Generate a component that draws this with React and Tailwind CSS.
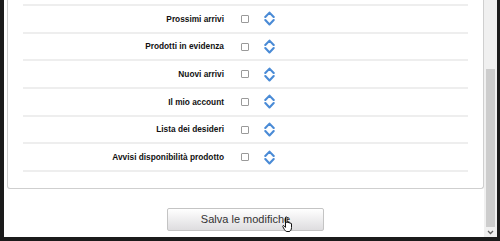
import React from "react"

const rows = [
  "Prossimi arrivi",
  "Prodotti in evidenza",
  "Nuovi arrivi",
  "Il mio account",
  "Lista dei desideri",
  "Avvisi disponibilità prodotto",
]

function SortIcon() {
  return (
    <svg width="11" height="15" viewBox="0 0 11 15" fill="none">
      <path d="M1.3 6 L5.5 1.6 L9.7 6" stroke="#4a8bd6" strokeWidth="2.1" strokeLinecap="round" strokeLinejoin="round" />
      <path d="M1.3 9 L5.5 13.4 L9.7 9" stroke="#4a8bd6" strokeWidth="2.1" strokeLinecap="round" strokeLinejoin="round" />
    </svg>
  )
}

function HandCursor() {
  return (
    <svg width="13" height="17" viewBox="0 0 13 17" className="absolute left-[114px] top-[7px]">
      <path
        d="M3.5 1.5 C3.5 0.6 5 0.6 5 1.5 L5 7 L5 6 C5 5.2 6.5 5.2 6.5 6 L6.5 7 C6.5 6.3 8 6.3 8 7 L8 7.6 C8 7 9.5 7 9.5 7.8 L9.5 11.5 C9.5 13.5 8.5 15.5 7 15.5 L5 15.5 C3.8 15.5 3 14.5 2.3 13.4 L0.8 10.6 C0.4 9.8 1.4 9.1 2 9.8 L3.5 11.4 Z"
        fill="#fff"
        stroke="#111"
        strokeWidth="1"
        strokeLinejoin="round"
      />
    </svg>
  )
}

export default function App() {
  return (
    <div className="w-[500px] h-[241px] bg-[#1b1b1b] pl-[4px] pr-[3px] pb-[4px] overflow-hidden" style={{ fontFamily: '"Liberation Sans", Arial, sans-serif' }}>
      <div className="flex h-full bg-white">
        {/* page content */}
        <div className="flex-1 flex flex-col pl-[3px]">
          <div className="border border-t-0 border-[#cfcfcf] rounded-b-[3px] px-[15px] pb-[16px]">
            <div className="h-[6px] border-b-2 border-[#eeeeee]" />
            {rows.map((label) => (
              <div key={label} className="h-[27.7px] border-b-2 border-[#eeeeee] flex items-center">
                <div className="w-[201px] text-right text-[8.3px] font-bold text-[#111]">{label}</div>
                <div className="ml-[17px] w-[8px] h-[8px] border border-[#9a9a9a] rounded-[1px] bg-white" />
                <div className="ml-[15px] flex">
                  <SortIcon />
                </div>
              </div>
            ))}
          </div>
          <div className="flex justify-center mt-[19px]">
            <button className="relative w-[157px] h-[23px] border border-[#c4c4c4] rounded-[2px] bg-gradient-to-b from-[#ffffff] to-[#dedddf] text-[11px] text-[#333] leading-none">
              Salva le modifiche
              <HandCursor />
            </button>
          </div>
        </div>
        {/* scrollbar */}
        <div className="w-[13px] bg-[#f0f0f0] flex flex-col">
          <div className="h-[69px]" />
          <div className="mx-[2px] h-[158px] bg-[#cdcdcd]" />
          <div className="flex-1 flex items-center justify-center">
            <svg width="7" height="5" viewBox="0 0 7 5">
              <path d="M1 1 L3.5 3.5 L6 1" stroke="#606060" strokeWidth="1.3" fill="none" />
            </svg>
          </div>
        </div>
      </div>
    </div>
  )
}
